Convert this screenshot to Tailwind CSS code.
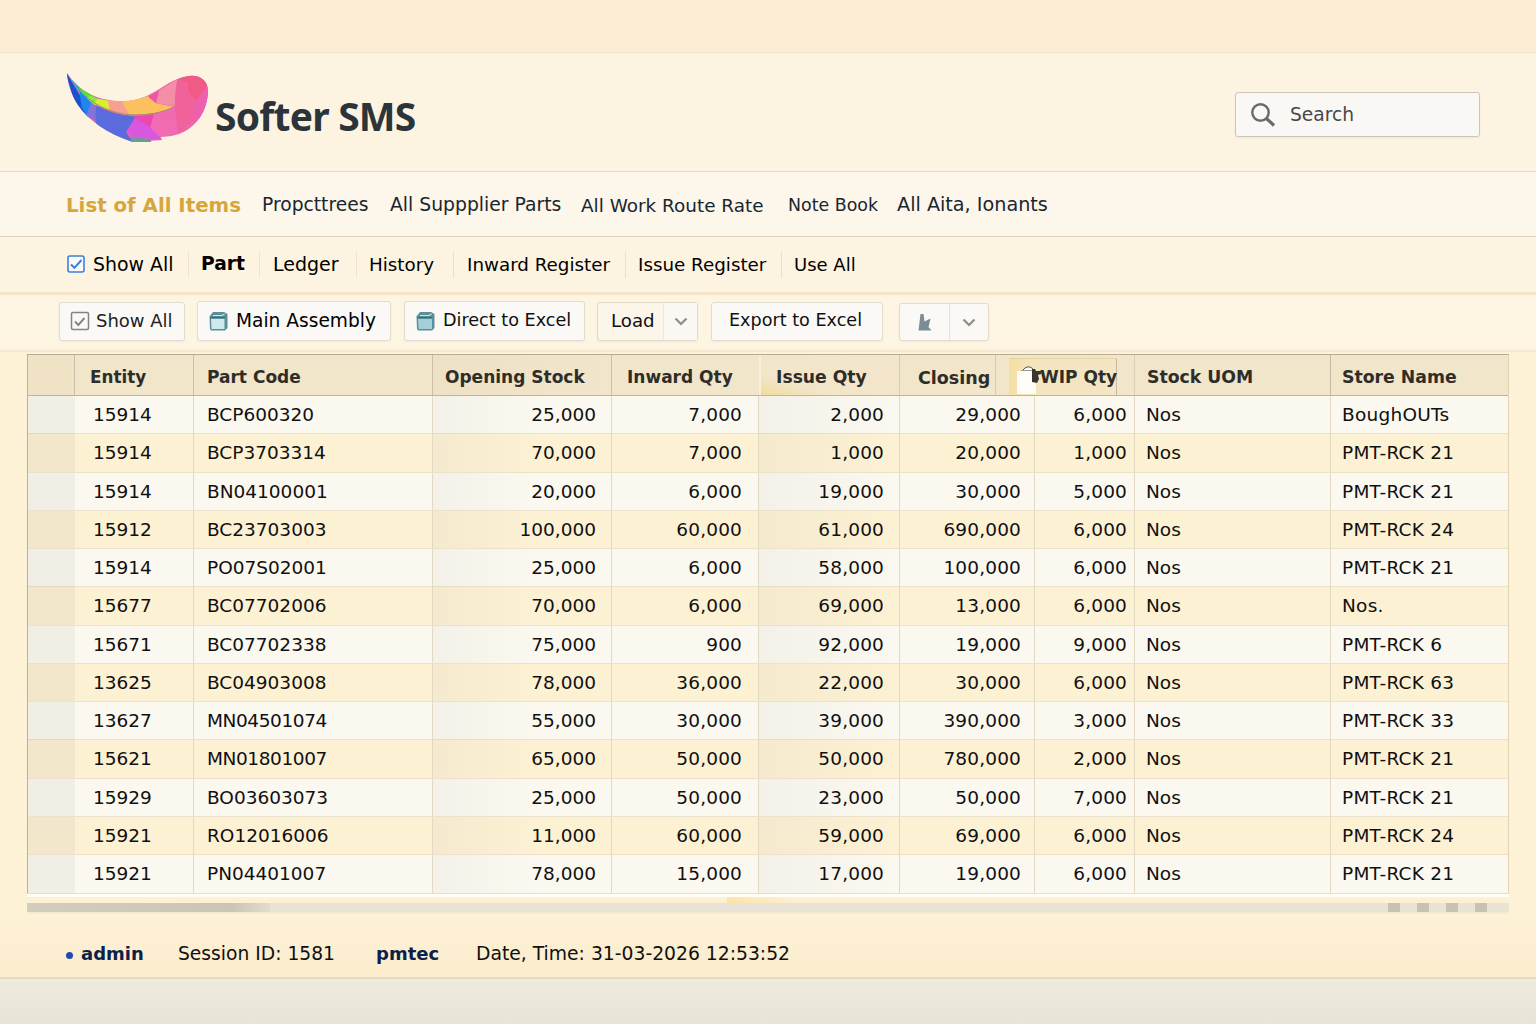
<!DOCTYPE html>
<html lang="en">
<head>
  <meta charset="UTF-8">
  <meta name="viewport" content="width=device-width, initial-scale=1.0">
  <title>Softer SMS - List of All Items</title>
  <script src="https://cdn.jsdelivr.net/npm/@tailwindcss/browser@4"></script>
</head>
<body class="flex h-screen flex-col overflow-hidden bg-[#fdf1d6] font-['DejaVu_Sans',sans-serif] text-[18.5px] text-[#101010] whitespace-nowrap">

  <!-- Top strip -->
  <div class="h-[53px] shrink-0 border-b border-[#f0e3c9] bg-[#fbeed4]"></div>

  <!-- Header -->
  <header class="flex h-[119px] shrink-0 items-center justify-between border-b border-[#e4dbc6] bg-[#fcf4e1] pr-14 pl-16">
    <div class="flex items-center">
      <svg class="-mt-3 h-[73px] w-[146px]" viewBox="42 60 438 219">
        <defs>
          <clipPath id="wing">
            <path d="M51 68C85 125 150 156 225 153C305 148 330 105 385 86C440 65 476 85 474 128C468 210 410 262 332 260L336 270L304 272L302 276L248 276C170 250 115 210 86 168C64 135 52 100 51 68Z"/>
          </clipPath>
        </defs>
        <g clip-path="url(#wing)">
          <rect x="40" y="55" width="440" height="225" fill="#ee67ab"/>
          <path d="M45 60L110 170L120 215L80 180Z" fill="#1553cf"/>
          <path d="M51 66L100 115L84 122Z" fill="#25b4c9"/>
          <path d="M88 120L128 162L112 200L95 172Z" fill="#1e86ee"/>
          <path d="M124 158L140 168L136 212L108 198Z" fill="#8572dc"/>
          <path d="M138 166Q190 196 258 200L228 246L252 280L150 240L136 215Z" fill="#5a6bdd"/>
          <path d="M258 199L312 194L300 240L250 210Z" fill="#ec46b0"/>
          <path d="M256 204L228 246L250 262L336 270L304 234Z" fill="#d957de"/>
          <path d="M240 260L304 268L302 278L246 278Z" fill="#6a9a9b"/>
          <path d="M312 194L374 170L384 250L332 262L300 232Z" fill="#f06bb2"/>
          <path d="M82 105L140 145L132 165L98 132Z" fill="#5ddc3a"/>
          <path d="M118 136L144 147L134 164L112 146Z" fill="#8be83c"/>
          <path d="M142 146L176 152L182 182L132 163Z" fill="#d8f02f"/>
          <path d="M174 150L222 152L238 196Q200 192 178 180Z" fill="#f7a092"/>
          <path d="M216 155L296 138L318 160L372 170Q320 196 238 194Z" fill="#fcc05e"/>
          <path d="M294 140L328 122L318 160Z" fill="#ee55a8"/>
          <path d="M328 120L382 88L374 168L318 160Z" fill="#f48da6"/>
          <path d="M382 88Q372 140 376 180L384 252L430 210L438 150L414 120L414 96Z" fill="#f1629a"/>
          <path d="M382 88L440 70L480 100L438 152L414 124L414 100Z" fill="#f15a86"/>
          <path d="M474 105L436 155L430 215L480 190Z" fill="#ee5fae"/>
          <path d="M86 118C130 170 200 196 262 195C310 194 345 185 372 170" fill="none" stroke="#a88a6a" stroke-width="3"/>
        </g>
      </svg>
      <h1 class="mt-[9px] ml-[5px] font-['Noto_Sans',sans-serif] text-[39px] font-bold tracking-[-0.8px] text-[#2c343b]">Softer SMS</h1>
    </div>
    <div class="mt-[5px] flex h-[45px] w-[245px] items-center rounded-[3px] border border-[#cdc6b8] bg-[#faf8f4] pl-[13px] text-[18.7px] text-[#484848] shadow-xs">
      <svg class="h-7 w-7" viewBox="0 0 28 28" fill="none" stroke="#6b6a66">
        <circle cx="11.5" cy="11.5" r="8.2" stroke-width="2.4"/>
        <path d="M17.5 17.5L25 24.5" stroke-width="3.2"/>
      </svg>
      <span class="mt-[1px] ml-[13px]">Search</span>
    </div>
  </header>

  <!-- Main navigation -->
  <nav class="flex h-[65px] shrink-0 items-center border-b border-[#ddd3c0] bg-[#fcf7ea] pt-[3px] pl-[66px] text-[#1b2530]">
    <a class="w-[196px] text-[19.8px] font-bold text-[#d6a63c]">List of All Items</a>
    <a class="w-[128px] text-[18.7px]">Propcttrees</a>
    <a class="w-[191px] text-[18.8px]">All Suppplier Parts</a>
    <a class="w-[207px] text-[18.4px]">All Work Route Rate</a>
    <a class="w-[109px] text-[17.4px]">Note Book</a>
    <a class="text-[19.2px]">All Aita, Ionants</a>
  </nav>

  <!-- Sub tabs -->
  <div class="flex h-[58px] shrink-0 items-center border-b-3 border-[#f5e4c8] bg-[#fcf3e0] pl-[67px] text-black">
    <svg class="-mt-[2px] h-[18px] w-[18px]" viewBox="0 0 18 18" fill="none" stroke="#3b7fe0">
      <rect x="1" y="1" width="16" height="16" rx="2" fill="#fbfaf8" stroke-width="1.6"/>
      <path d="M4 9.5L7.4 12.8L14.5 5" stroke-width="2"/>
    </svg>
    <a class="ml-[8px] w-[95px] text-[18.9px]">Show All</a>
    <a class="flex h-[27px] w-[71px] items-center border-l border-[#f0e4cd] pl-3 text-[18.7px] font-bold">Part</a>
    <a class="flex h-[27px] w-[97px] items-center border-l border-[#f0e4cd] pl-[13px] text-[19px]">Ledger</a>
    <a class="flex h-[27px] w-[97px] items-center border-l border-[#f0e4cd] pl-3 text-[18.3px]">History</a>
    <a class="flex h-[27px] w-[172px] items-center border-l border-[#ecdfc6] pl-[13px] text-[18.3px]">Inward Register</a>
    <a class="flex h-[27px] w-[156px] items-center border-l border-[#ecdfc6] pl-3 text-[18.3px]">Issue Register</a>
    <a class="flex h-[27px] items-center border-l border-[#ecdfc6] pl-3 text-[18px]">Use All</a>
  </div>

  <!-- Toolbar -->
  <div class="flex h-[57px] shrink-0 items-start border-b-2 border-[#f5e8cf] bg-[#fdf4e1] pt-[6px] pl-[59px]">
    <button class="mt-[1px] flex h-[39px] w-[126px] items-center rounded-[3px] border border-[#e3dccd] bg-[#faf9f6] pl-[10px] text-[18px] shadow-xs">
      <svg class="-mt-[1px] h-5 w-5" viewBox="0 0 20 20" fill="none" stroke="#85838a">
        <rect x="1.5" y="1.5" width="17" height="17" rx="1.5" stroke-width="1.5"/>
        <path d="M5 10.5L8.3 14L14.5 7" stroke-width="1.9"/>
      </svg>
      <span class="-mt-[2px] ml-[6px] text-[#222]">Show All</span>
    </button>
    <button class="ml-3 flex h-[40px] w-[194px] items-center rounded-[3px] border border-[#e3dccd] bg-[#faf9f6] pl-[11px] text-[18.6px] text-black shadow-xs">
      <svg class="-mt-[1px] h-5 w-[19px]" viewBox="0 0 19 20">
        <path d="M.5 5.500L4 1H15L18.500 3V17L16 19.500H2L1 18Z" fill="#5a8f98"/>
        <path d="M2 7.500H15.500V18H2.500Z" fill="#cfe9ee"/>
        <path d="M4 4.500H13L15.500 3" fill="none" stroke="#cfe6e6" stroke-width="1.2"/>
        <path d="M1.500 6.800H16" stroke="#2f6a70" stroke-width="1.300"/>
      </svg>
      <span class="ml-[8px]">Main Assembly</span>
    </button>
    <button class="ml-[13px] flex h-[40px] w-[181px] items-center rounded-[3px] border border-[#e3dccd] bg-[#faf9f6] pl-[11px] text-[17.6px] shadow-xs">
      <svg class="-mt-[1px] h-5 w-[19px]" viewBox="0 0 19 20">
        <path d="M.5 5.500L4 1H15L18.500 3V17L16 19.500H2L1 18Z" fill="#5a8f98"/>
        <path d="M2 7.500H16V18H2.500Z" fill="#a3cfd8"/>
        <path d="M4 4.500H13L15.500 3" fill="none" stroke="#cfe6e6" stroke-width="1.2"/>
        <path d="M1.500 6.800H16" stroke="#2f6a70" stroke-width="1.300"/>
      </svg>
      <span class="-mt-[1px] ml-[8px]">Direct to Excel</span>
    </button>
    <button class="mt-[1px] ml-[12px] flex h-[39px] w-[101px] items-center rounded-[3px] border border-[#e3d8c4] bg-[#fcf5e9] text-[18.2px] shadow-xs">
      <span class="-mt-[2px] w-[65px] pl-[13px] text-left">Load</span>
      <span class="flex h-full flex-1 items-center justify-center border-l border-[#f0e9da] bg-[#faf8f3]">
        <svg class="h-[9px] w-[14px]" viewBox="0 0 14 9" fill="none" stroke="#8f8c86" stroke-width="2.2"><path d="M1.500 1.500L7 7L12.500 1.500"/></svg>
      </span>
    </button>
    <button class="mt-[1px] ml-[13px] flex h-[39px] w-[172px] items-center rounded-[3px] border border-[#e3dccd] bg-[#faf9f6] pb-[2px] pl-[17px] text-[17.6px] shadow-xs">Export to Excel</button>
    <button class="mt-[2px] ml-4 flex h-[38px] w-[90px] items-center rounded-[3px] border border-[#e3dccd] bg-[#faf9f6] shadow-xs">
      <span class="flex w-[49px] justify-center">
        <svg class="h-[18px] w-[14px]" viewBox="0 0 14 18"><path d="M2.500 1H5.500L6.500 8.500L12.500 5.500L11 12L10.500 14L13.500 17.500H.5Z" fill="#7b8c93"/></svg>
      </span>
      <span class="flex h-full flex-1 items-center justify-center border-l border-[#eadfcb]">
        <svg class="h-[9px] w-[14px]" viewBox="0 0 14 9" fill="none" stroke="#8f8c86" stroke-width="2.2"><path d="M1.500 1.500L7 7L12.500 1.500"/></svg>
      </span>
    </button>
  </div>

  <!-- Stock table -->
  <main class="mt-[2px] ml-[27px] w-[1482px] shrink-0">
    <div class="border border-t-[#b8ae98] border-r-[#e3d3b3] border-b-[#e6dfcf] border-l-[#bcb29c]">
      <div class="flex h-[41px] items-center border-b border-[#bdb4a1] bg-[#f1e5ca] text-[17px] font-bold text-[#2f2d2a]">
        <div class="h-full w-[47px] shrink-0 border-r border-[#c9bfaa] bg-[#efe2c5]"></div>
        <div class="flex h-full w-[119px] shrink-0 items-center border-r border-[#c9bfaa] pt-[6px] pl-[15px] text-[16.8px]">Entity</div>
        <div class="flex h-full w-[239px] shrink-0 items-center border-r border-[#c9bfaa] pt-[6px] pl-[13px]">Part Code</div>
        <div class="flex h-full w-[179px] shrink-0 items-center border-r border-[#c9bfaa] bg-linear-to-r from-[#eee1c5] to-[#f1e5cb] pt-[6px] pl-3">Opening Stock</div>
        <div class="flex h-full w-[149px] shrink-0 items-center border-r-2 border-[#f9f0dc] pt-[6px] pl-[15px]">Inward Qty</div>
        <div class="flex h-full w-[139px] shrink-0 items-center border-r border-[#d6ccb8] bg-linear-to-tr from-[#f1dc9e] via-[#f2e5c8] via-25% to-[#f2e6cc] pt-[6px] pl-[15px] text-[17.2px]">Issue Qty</div>
        <div class="flex h-full w-[96px] shrink-0 items-center border-r border-[#d3c9b4] pt-[6px] pl-[18px] text-[17.5px]">Closing</div>
        <!-- dragged WIP header -->
        <div class="mt-[3px] ml-[13px] flex h-[37px] w-[108px] shrink-0 items-center border-t border-r border-t-[#e6d49f] border-r-[#c4baa4] bg-linear-to-r from-[#f4dfa0] via-[#f4e5bf] via-20% to-[#f3e5c5]">
          <svg class="mt-1 ml-[7px] h-[30px] w-[25px] shrink-0" viewBox="0 0 25 30">
            <path d="M1 7H20V30H1Z" fill="#fffdf8"/>
            <path d="M6 7Q12 -1 18 6" fill="#fffdf8" stroke="#555" stroke-width="1"/>
            <path d="M5 6.500H16" stroke="#999" stroke-width="1"/>
            <path d="M16 5H19L20 7H25V10L22 11L23 15L21 19L16 18Z" fill="#3a3431"/>
          </svg>
          <span class="mt-[2px] -ml-[1px]">WIP Qty</span>
        </div>
        <div class="h-full w-[18px] shrink-0 border-r border-[#d9cfba]"></div>
        <div class="flex h-full w-[196px] shrink-0 items-center border-r border-[#c4baa4] pt-[6px] pl-[12px] text-[17.3px]">Stock UOM</div>
        <div class="pt-[6px] pl-[11px] text-[17.3px]">Store Name</div>
      </div>
      <div id="rows"></div>
    </div>
    <div class="h-[3px] bg-[#fffdf6]"></div>
    <div class="h-[6px] bg-[#fdf1d3]">
      <div class="ml-[700px] h-full w-[70px] bg-linear-to-r from-[#fbe3a8] to-[#fdf1d3]"></div>
    </div>
    <!-- Horizontal scrollbar -->
    <div class="flex h-[9px] items-center justify-between bg-[#e9e3d5] pr-[22px]">
      <div class="h-full w-[243px] bg-linear-to-r from-[#d3cdbf] via-[#cbc5b8] via-85% to-[#e3ddcf]"></div>
      <div class="flex h-full gap-[17px]">
        <div class="w-3 bg-[#c8c2b4]"></div>
        <div class="w-3 bg-[#c8c2b4]"></div>
        <div class="w-3 bg-[#c8c2b4]"></div>
        <div class="w-3 bg-[#c8c2b4]"></div>
      </div>
    </div>
    <div class="h-[2px] bg-[#f6ead2]"></div>
  </main>

  <!-- Session info -->
  <footer class="flex flex-1 items-center border-b-2 border-[#e6d8bb] bg-linear-to-b from-[#fdf1d6] to-[#fbeccd] pt-[16px] pl-[66px]">
    <span class="mt-[3px] h-[7px] w-[7px] rounded-full bg-[#2147b0]"></span>
    <span class="ml-[8px] w-[97px] text-[18px] font-bold text-[#0b2149]">admin</span>
    <span class="mt-[1px] w-[198px] text-[18.7px]">Session ID: 1581</span>
    <span class="w-[100px] text-[18px] font-bold text-[#0b2149]">pmtec</span>
    <span class="mt-[1px] text-[18.75px]">Date, Time: 31-03-2026 12:53:52</span>
  </footer>
  <div class="h-[45px] shrink-0 bg-linear-to-b from-[#eeeadd] to-[#e9e4d8]"></div>

  <script>
    const items = [
      ["15914", "BCP600320", "25,000", "7,000", "2,000", "29,000", "6,000", "Nos", "BoughOUTs"],
      ["15914", "BCP3703314", "70,000", "7,000", "1,000", "20,000", "1,000", "Nos", "PMT-RCK 21"],
      ["15914", "BN04100001", "20,000", "6,000", "19,000", "30,000", "5,000", "Nos", "PMT-RCK 21"],
      ["15912", "BC23703003", "100,000", "60,000", "61,000", "690,000", "6,000", "Nos", "PMT-RCK 24"],
      ["15914", "PO07S02001", "25,000", "6,000", "58,000", "100,000", "6,000", "Nos", "PMT-RCK 21"],
      ["15677", "BC07702006", "70,000", "6,000", "69,000", "13,000", "6,000", "Nos", "Nos."],
      ["15671", "BC07702338", "75,000", "900", "92,000", "19,000", "9,000", "Nos", "PMT-RCK 6"],
      ["13625", "BC04903008", "78,000", "36,000", "22,000", "30,000", "6,000", "Nos", "PMT-RCK 63"],
      ["13627", "MN04501074", "55,000", "30,000", "39,000", "390,000", "3,000", "Nos", "PMT-RCK 33"],
      ["15621", "MN01801007", "65,000", "50,000", "50,000", "780,000", "2,000", "Nos", "PMT-RCK 21"],
      ["15929", "BO03603073", "25,000", "50,000", "23,000", "50,000", "7,000", "Nos", "PMT-RCK 21"],
      ["15921", "RO12016006", "11,000", "60,000", "59,000", "69,000", "6,000", "Nos", "PMT-RCK 24"],
      ["15921", "PN04401007", "78,000", "15,000", "17,000", "19,000", "6,000", "Nos", "PMT-RCK 21"]
    ];

    // Padding and alignment for each column
    const columns = [
      "pl-[18px]",
      "pl-[13px]",
      "pr-[15px] text-right bg-linear-to-r from-black/3 to-transparent to-60%",
      "pr-[16px] text-right tracking-[0.15px]",
      "pr-[15px] text-right tracking-[0.15px] bg-linear-to-r from-black/3 to-transparent",
      "pr-[13px] text-right tracking-[0.15px]",
      "pr-[7px] text-right tracking-[0.15px]",
      "pl-[11px]",
      "pl-[11px] tracking-[0.25px]"
    ];

    document.getElementById("rows").innerHTML = items.map((item, i) => {
      const color = i % 2 ? "bg-[#fdf1d4]" : "bg-[#fbf8f0]";
      const line = i < items.length - 1 ? "border-b border-[#ebe1cc]" : "";
      const cells = item.map((text, c) => {
        const edge = c < 8 ? "border-r border-[#e3d8c2]" : "";
        const tight = text.startsWith("MN") ? "tracking-[-0.4px]" : "";
        return `<div class="h-full leading-[37.5px] ${columns[c]} ${edge} ${tight}">${text}</div>`;
      }).join("");
      return `<div class="grid h-[38.27px] grid-cols-[47px_119px_239px_179px_147px_141px_135px_100px_196px_177px] ${color} ${line}">
        <div class="h-full bg-black/4"></div>${cells}</div>`;
    }).join("");
  </script>
</body>
</html>
